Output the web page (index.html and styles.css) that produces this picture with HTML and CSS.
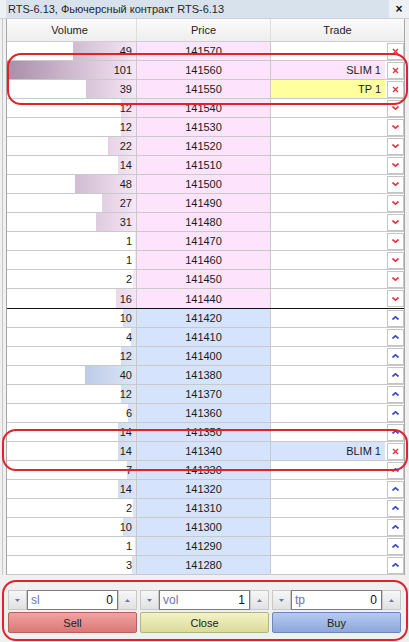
FILE: index.html
```html
<!DOCTYPE html>
<html>
<head>
<meta charset="utf-8">
<link rel="stylesheet" href="styles.css">
</head>
<body>
<div class="win">
  <div class="title">
    <span class="title-text">RTS-6.13, Фьючерсный контракт RTS-6.13</span>
    <span class="close">×</span>
  </div>
  <div class="frame">
    <div class="book">
      <div class="row head">
        <div class="c vol">Volume</div><div class="c price">Price</div><div class="c trade">Trade</div>
      </div>

      <div class="row ask"><div class="c vol" style="--w:63px">49</div><div class="c price">141570</div><div class="c trade"><span class="ord"></span><span class="tb x"><svg viewBox="0 0 7 7" width="7" height="7"><path d="M1 1L6 6M6 1L1 6"/></svg></span></div></div>
      <div class="row ask"><div class="c vol" style="--w:129px">101</div><div class="c price">141560</div><div class="c trade"><span class="ord pink">SLIM 1</span><span class="tb x"><svg viewBox="0 0 7 7" width="7" height="7"><path d="M1 1L6 6M6 1L1 6"/></svg></span></div></div>
      <div class="row ask"><div class="c vol" style="--w:50px">39</div><div class="c price">141550</div><div class="c trade"><span class="ord yellow">TP 1</span><span class="tb x"><svg viewBox="0 0 7 7" width="7" height="7"><path d="M1 1L6 6M6 1L1 6"/></svg></span></div></div>
      <div class="row ask"><div class="c vol" style="--w:15px">12</div><div class="c price">141540</div><div class="c trade"><span class="ord"></span><span class="tb dn"><svg viewBox="0 0 7 4" width="7" height="4"><path d="M0.5 0.5L3.5 3.2L6.5 0.5"/></svg></span></div></div>
      <div class="row ask"><div class="c vol" style="--w:15px">12</div><div class="c price">141530</div><div class="c trade"><span class="ord"></span><span class="tb dn"><svg viewBox="0 0 7 4" width="7" height="4"><path d="M0.5 0.5L3.5 3.2L6.5 0.5"/></svg></span></div></div>
      <div class="row ask"><div class="c vol" style="--w:28px">22</div><div class="c price">141520</div><div class="c trade"><span class="ord"></span><span class="tb dn"><svg viewBox="0 0 7 4" width="7" height="4"><path d="M0.5 0.5L3.5 3.2L6.5 0.5"/></svg></span></div></div>
      <div class="row ask"><div class="c vol" style="--w:18px">14</div><div class="c price">141510</div><div class="c trade"><span class="ord"></span><span class="tb dn"><svg viewBox="0 0 7 4" width="7" height="4"><path d="M0.5 0.5L3.5 3.2L6.5 0.5"/></svg></span></div></div>
      <div class="row ask"><div class="c vol" style="--w:61px">48</div><div class="c price">141500</div><div class="c trade"><span class="ord"></span><span class="tb dn"><svg viewBox="0 0 7 4" width="7" height="4"><path d="M0.5 0.5L3.5 3.2L6.5 0.5"/></svg></span></div></div>
      <div class="row ask"><div class="c vol" style="--w:34px">27</div><div class="c price">141490</div><div class="c trade"><span class="ord"></span><span class="tb dn"><svg viewBox="0 0 7 4" width="7" height="4"><path d="M0.5 0.5L3.5 3.2L6.5 0.5"/></svg></span></div></div>
      <div class="row ask"><div class="c vol" style="--w:40px">31</div><div class="c price">141480</div><div class="c trade"><span class="ord"></span><span class="tb dn"><svg viewBox="0 0 7 4" width="7" height="4"><path d="M0.5 0.5L3.5 3.2L6.5 0.5"/></svg></span></div></div>
      <div class="row ask"><div class="c vol" style="--w:1px">1</div><div class="c price">141470</div><div class="c trade"><span class="ord"></span><span class="tb dn"><svg viewBox="0 0 7 4" width="7" height="4"><path d="M0.5 0.5L3.5 3.2L6.5 0.5"/></svg></span></div></div>
      <div class="row ask"><div class="c vol" style="--w:1px">1</div><div class="c price">141460</div><div class="c trade"><span class="ord"></span><span class="tb dn"><svg viewBox="0 0 7 4" width="7" height="4"><path d="M0.5 0.5L3.5 3.2L6.5 0.5"/></svg></span></div></div>
      <div class="row ask"><div class="c vol" style="--w:3px">2</div><div class="c price">141450</div><div class="c trade"><span class="ord"></span><span class="tb dn"><svg viewBox="0 0 7 4" width="7" height="4"><path d="M0.5 0.5L3.5 3.2L6.5 0.5"/></svg></span></div></div>
      <div class="row ask last"><div class="c vol" style="--w:20px">16</div><div class="c price">141440</div><div class="c trade"><span class="ord"></span><span class="tb dn"><svg viewBox="0 0 7 4" width="7" height="4"><path d="M0.5 0.5L3.5 3.2L6.5 0.5"/></svg></span></div></div>

      <div class="row bid"><div class="c vol" style="--w:13px">10</div><div class="c price">141420</div><div class="c trade"><span class="ord"></span><span class="tb up"><svg viewBox="0 0 7 4" width="7" height="4"><path d="M0.5 3.5L3.5 0.8L6.5 3.5"/></svg></span></div></div>
      <div class="row bid"><div class="c vol" style="--w:5px">4</div><div class="c price">141410</div><div class="c trade"><span class="ord"></span><span class="tb up"><svg viewBox="0 0 7 4" width="7" height="4"><path d="M0.5 3.5L3.5 0.8L6.5 3.5"/></svg></span></div></div>
      <div class="row bid"><div class="c vol" style="--w:15px">12</div><div class="c price">141400</div><div class="c trade"><span class="ord"></span><span class="tb up"><svg viewBox="0 0 7 4" width="7" height="4"><path d="M0.5 3.5L3.5 0.8L6.5 3.5"/></svg></span></div></div>
      <div class="row bid"><div class="c vol" style="--w:51px">40</div><div class="c price">141380</div><div class="c trade"><span class="ord"></span><span class="tb up"><svg viewBox="0 0 7 4" width="7" height="4"><path d="M0.5 3.5L3.5 0.8L6.5 3.5"/></svg></span></div></div>
      <div class="row bid"><div class="c vol" style="--w:15px">12</div><div class="c price">141370</div><div class="c trade"><span class="ord"></span><span class="tb up"><svg viewBox="0 0 7 4" width="7" height="4"><path d="M0.5 3.5L3.5 0.8L6.5 3.5"/></svg></span></div></div>
      <div class="row bid"><div class="c vol" style="--w:8px">6</div><div class="c price">141360</div><div class="c trade"><span class="ord"></span><span class="tb up"><svg viewBox="0 0 7 4" width="7" height="4"><path d="M0.5 3.5L3.5 0.8L6.5 3.5"/></svg></span></div></div>
      <div class="row bid"><div class="c vol" style="--w:18px">14</div><div class="c price">141350</div><div class="c trade"><span class="ord"></span><span class="tb up"><svg viewBox="0 0 7 4" width="7" height="4"><path d="M0.5 3.5L3.5 0.8L6.5 3.5"/></svg></span></div></div>
      <div class="row bid"><div class="c vol" style="--w:18px">14</div><div class="c price">141340</div><div class="c trade"><span class="ord blue">BLIM 1</span><span class="tb x"><svg viewBox="0 0 7 7" width="7" height="7"><path d="M1 1L6 6M6 1L1 6"/></svg></span></div></div>
      <div class="row bid"><div class="c vol" style="--w:9px">7</div><div class="c price">141330</div><div class="c trade"><span class="ord"></span><span class="tb up"><svg viewBox="0 0 7 4" width="7" height="4"><path d="M0.5 3.5L3.5 0.8L6.5 3.5"/></svg></span></div></div>
      <div class="row bid"><div class="c vol" style="--w:18px">14</div><div class="c price">141320</div><div class="c trade"><span class="ord"></span><span class="tb up"><svg viewBox="0 0 7 4" width="7" height="4"><path d="M0.5 3.5L3.5 0.8L6.5 3.5"/></svg></span></div></div>
      <div class="row bid"><div class="c vol" style="--w:3px">2</div><div class="c price">141310</div><div class="c trade"><span class="ord"></span><span class="tb up"><svg viewBox="0 0 7 4" width="7" height="4"><path d="M0.5 3.5L3.5 0.8L6.5 3.5"/></svg></span></div></div>
      <div class="row bid"><div class="c vol" style="--w:13px">10</div><div class="c price">141300</div><div class="c trade"><span class="ord"></span><span class="tb up"><svg viewBox="0 0 7 4" width="7" height="4"><path d="M0.5 3.5L3.5 0.8L6.5 3.5"/></svg></span></div></div>
      <div class="row bid"><div class="c vol" style="--w:1px">1</div><div class="c price">141290</div><div class="c trade"><span class="ord"></span><span class="tb up"><svg viewBox="0 0 7 4" width="7" height="4"><path d="M0.5 3.5L3.5 0.8L6.5 3.5"/></svg></span></div></div>
      <div class="row bid"><div class="c vol" style="--w:4px">3</div><div class="c price">141280</div><div class="c trade"><span class="ord"></span><span class="tb up"><svg viewBox="0 0 7 4" width="7" height="4"><path d="M0.5 3.5L3.5 0.8L6.5 3.5"/></svg></span></div></div>
    </div>
  </div>

  <div class="panel">
    <div class="spins">
      <div class="spin">
        <span class="sbtn"><svg viewBox="0 0 5 3" width="5" height="3"><path d="M0 0H5L2.5 3Z"/></svg></span>
        <span class="sinput"><span class="lbl">sl</span><span class="val">0</span></span>
        <span class="sbtn"><svg viewBox="0 0 5 3" width="5" height="3"><path d="M0 3H5L2.5 0Z"/></svg></span>
      </div>
      <div class="spin">
        <span class="sbtn"><svg viewBox="0 0 5 3" width="5" height="3"><path d="M0 0H5L2.5 3Z"/></svg></span>
        <span class="sinput"><span class="lbl">vol</span><span class="val">1</span></span>
        <span class="sbtn"><svg viewBox="0 0 5 3" width="5" height="3"><path d="M0 3H5L2.5 0Z"/></svg></span>
      </div>
      <div class="spin">
        <span class="sbtn"><svg viewBox="0 0 5 3" width="5" height="3"><path d="M0 0H5L2.5 3Z"/></svg></span>
        <span class="sinput"><span class="lbl">tp</span><span class="val">0</span></span>
        <span class="sbtn"><svg viewBox="0 0 5 3" width="5" height="3"><path d="M0 3H5L2.5 0Z"/></svg></span>
      </div>
    </div>
    <div class="actions">
      <span class="act sell">Sell</span>
      <span class="act closeb">Close</span>
      <span class="act buy">Buy</span>
    </div>
  </div>

  <div class="mark m1"></div>
  <div class="mark m2"></div>
  <div class="mark m3"></div>
</div>
</body>
</html>
```

FILE: styles.css
```css
* { box-sizing: border-box; }
html, body { margin: 0; padding: 0; }
body {
  width: 409px;
  height: 642px;
  overflow: hidden;
  background: #f0f0f0;
  font-family: "Liberation Sans", Arial, sans-serif;
  font-size: 11px;
  color: #1a1a1a;
}
.win {
  position: relative;
  width: 409px;
  height: 642px;
}
.title {
  display: flex;
  height: 19px;
  padding-left: 6px;
  background: #eef1f4;
  border-bottom: 1px solid #c9d1da;
}
.title-text {
  flex: 1;
  background: #d8e2ec;
  padding-left: 2px;
  line-height: 18px;
  color: #262626;
  white-space: nowrap;
  overflow: hidden;
}
.close {
  width: 20px;
  text-align: center;
  font-weight: bold;
  font-size: 12px;
  line-height: 18px;
  color: #111;
}
.frame {
  display: flex;
  padding-left: 3px;
  border-left: 1px solid #c8c8c8;
  margin-left: 2px;
}
.book {
  width: 399px;
  border-left: 1px solid #a8a8a8;
  border-right: 1px solid #a8a8a8;
  background: #fff;
}
.row {
  display: flex;
  height: 19px;
  border-bottom: 1px solid #c9c9c9;
}
.row.head {
  height: 23px;
  background: linear-gradient(#fbfbfb, #eeeeee);
  border-bottom: 1px solid #cfcfcf;
}
.row.head .c {
  justify-content: center;
  color: #222;
  border-right-color: #dedede;
}
.row.last {
  height: 20px;
  border-bottom: 1px solid #111;
}
.c {
  display: flex;
  align-items: center;
  border-right: 1px solid #c9c9c9;
}
.vol {
  width: 130px;
  justify-content: flex-end;
  padding-right: 4px;
}
.price {
  width: 134px;
  justify-content: center;
}
.trade {
  flex: 1;
  border-right: none;
}
.ask .vol {
  background:
    linear-gradient(to right, #fff calc(100% - var(--w)), transparent calc(100% - var(--w))),
    linear-gradient(to right, #a88ea8, #f6e6f6);
}
.bid .vol {
  background:
    linear-gradient(to right, #fff calc(100% - var(--w)), transparent calc(100% - var(--w))),
    linear-gradient(to right, #8ea2cc, #dce6f8);
}
.ask .price { background: #fde3fb; }
.bid .price { background: #d6e3fc; }
.ord {
  flex: 1;
  align-self: stretch;
  display: flex;
  align-items: center;
  justify-content: flex-end;
  padding-right: 4px;
  margin-right: 2px;
}
.ord.pink { background: #fde3fb; }
.ord.yellow { background: #ffff9e; }
.ord.blue { background: #d6e3fc; }
.tb {
  width: 17px;
  height: 17px;
  border: 1px solid #c4c4c4;
  background: #fff;
  display: flex;
  align-items: center;
  justify-content: center;
}
.tb svg { fill: none; stroke-width: 1.6; }
.tb.x svg { stroke: #e8323a; stroke-width: 1.4; }
.tb.dn svg { stroke: #e8323a; }
.tb.up svg { stroke: #3446d6; }

.panel {
  height: 66px;
  padding: 15px 8px 0;
  background: #f0f0f0;
}
.spins, .actions {
  display: grid;
  grid-template-columns: 129px 129px 129px;
  column-gap: 3px;
}
.spin {
  display: flex;
  height: 20px;
}
.sbtn {
  width: 19px;
  border: 1px solid #c8c8c8;
  background: linear-gradient(#f7f7f7, #e1e1e1);
  display: flex;
  align-items: center;
  justify-content: center;
}
.sbtn svg { fill: #6d7ba8; }
.sinput {
  flex: 1;
  border: 1px solid #7c7c7c;
  background: #fff;
  display: flex;
  align-items: center;
  justify-content: space-between;
  padding: 0 4px 0 3px;
  font-size: 12px;
}
.lbl { color: #6878a8; }
.val { color: #111; }
.actions { margin-top: 2px; }
.act {
  height: 21px;
  display: flex;
  align-items: center;
  justify-content: center;
  border-radius: 2px;
  font-size: 11px;
  color: #222;
}
.sell {
  background: linear-gradient(#f3a2a2, #d97878);
  border: 1px solid #b06464;
}
.closeb {
  background: linear-gradient(#f3f3c2, #dada9c);
  border: 1px solid #b4b482;
}
.buy {
  background: linear-gradient(#b6cbf1, #8ea7da);
  border: 1px solid #6f86bc;
}
.mark {
  position: absolute;
  border: 2px solid #e3212b;
  border-radius: 14px;
  pointer-events: none;
}
.m1 { left: 7px; top: 53px; width: 401px; height: 52px; }
.m2 { left: 2px; top: 429px; width: 406px; height: 42px; }
.m3 { left: 2px; top: 580px; width: 406px; height: 61px; }
```
